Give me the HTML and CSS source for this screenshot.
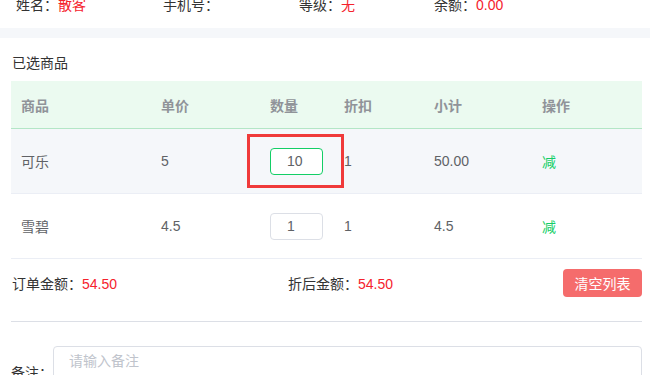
FILE: index.html
```html
<!DOCTYPE html>
<html lang="zh-CN">
<head>
    <meta charset="UTF-8">
    <meta name="viewport" content="width=device-width, initial-scale=1.0">
    <title>收银台</title>
    <link rel="stylesheet" href="styles.css">
</head>
<body>
    <div class="page">
        <!-- 会员信息 -->
        <div class="member-bar">
            <div class="member-item item-name">姓名：<span class="red">散客</span></div>
            <div class="member-item item-phone">手机号：</div>
            <div class="member-item item-level">等级：<span class="red">无</span></div>
            <div class="member-item">余额：<span class="red">0.00</span></div>
        </div>
        <div class="band"></div>

        <div class="content">
            <div class="section-title">已选商品</div>

            <table class="goods-table">
                <colgroup>
                    <col style="width: 140px">
                    <col style="width: 109px">
                    <col style="width: 74px">
                    <col style="width: 90px">
                    <col style="width: 108px">
                    <col style="width: 110px">
                </colgroup>
                <thead>
                    <tr>
                        <th>商品</th>
                        <th>单价</th>
                        <th>数量</th>
                        <th>折扣</th>
                        <th>小计</th>
                        <th>操作</th>
                    </tr>
                </thead>
                <tbody>
                    <tr class="row-hover">
                        <td>可乐</td>
                        <td>5</td>
                        <td>
                            <div class="qty-wrap">
                                <input type="text" class="qty-input active" value="10">
                                <span class="highlight"></span>
                            </div>
                        </td>
                        <td>1</td>
                        <td>50.00</td>
                        <td><a class="op-link">减</a></td>
                    </tr>
                    <tr>
                        <td>雪碧</td>
                        <td>4.5</td>
                        <td>
                            <div class="qty-wrap">
                                <input type="text" class="qty-input" value="1">
                            </div>
                        </td>
                        <td>1</td>
                        <td>4.5</td>
                        <td><a class="op-link">减</a></td>
                    </tr>
                </tbody>
            </table>

            <div class="summary">
                <div class="sum-item sum-order">订单金额：<span class="red">54.50</span></div>
                <div class="sum-item">折后金额：<span class="red">54.50</span></div>
                <button class="btn-clear">清空列表</button>
            </div>

            <div class="divider"></div>

            <div class="remark">
                <label for="remark">备注：</label>
                <textarea id="remark" placeholder="请输入备注"></textarea>
            </div>
        </div>
    </div>
</body>
</html>
```

FILE: styles.css
```css
body {
    margin: 0;
    font-family: "Liberation Sans", "Noto Sans CJK SC", sans-serif;
    font-size: 14px;
    color: #606266;
    background-color: #fff;
}

.page {
    margin-top: -5px;
}

.red {
    color: #f5222d;
}

/* 会员信息 */
.member-bar {
    display: flex;
    height: 33px;
    padding-left: 16px;
    line-height: 20px;
    color: #333;
}

.item-name {
    width: 147px;
}

.item-phone {
    width: 136px;
}

.item-level {
    width: 135px;
}

.band {
    height: 10px;
    background-color: #f5f7fa;
}

.content {
    padding: 15px 8px 0 11px;
}

.section-title {
    line-height: 20px;
    padding-left: 1px;
    color: #333;
    margin-bottom: 8px;
}

/* 商品表格 */
.goods-table {
    width: 631px;
    border-collapse: collapse;
    table-layout: fixed;
}

.goods-table th {
    height: 47px;
    padding: 0 10px;
    text-align: left;
    font-weight: bold;
    color: #909399;
    background-color: #ebfaf0;
    border-bottom: 1px solid #b3e6c6;
}

.goods-table td {
    height: 64px;
    padding: 0 10px;
    border-bottom: 1px solid #ebeef5;
}

.row-hover td {
    background-color: #f5f7fa;
}

.qty-wrap {
    position: relative;
    width: 53px;
}

.qty-input {
    box-sizing: border-box;
    width: 53px;
    height: 27px;
    padding: 0 0 0 16px;
    border: 1px solid #dcdfe6;
    border-radius: 4px;
    font-family: inherit;
    font-size: 14px;
    color: #606266;
    background-color: #fff;
    outline: none;
}

.qty-input.active {
    border-color: #13ce66;
}

.highlight {
    position: absolute;
    left: -23px;
    top: -14px;
    width: 97px;
    height: 54px;
    box-sizing: border-box;
    border: 3px solid #f03a3a;
}

.op-link {
    color: #13ce66;
    cursor: pointer;
}

/* 合计 */
.summary {
    display: flex;
    align-items: center;
    padding: 10px 0 0 1px;
    color: #333;
}

.sum-order {
    width: 276px;
}

.btn-clear {
    margin-left: auto;
    width: 79px;
    height: 28px;
    padding: 0;
    border: none;
    border-radius: 4px;
    background-color: #f56c6c;
    color: #fff;
    font-family: inherit;
    font-size: 14px;
    cursor: pointer;
}

.divider {
    height: 1px;
    margin: 24px 0;
    background-color: #dcdfe6;
}

/* 备注 */
.remark {
    display: flex;
    align-items: center;
    color: #333;
}

.remark label {
    width: 42px;
}

.remark textarea {
    flex: 1;
    box-sizing: border-box;
    height: 52px;
    padding: 4px 15px;
    border: 1px solid #dcdfe6;
    border-radius: 4px;
    font-family: inherit;
    font-size: 14px;
    line-height: 21px;
    resize: none;
    outline: none;
}

.remark textarea::placeholder {
    color: #c0c4cc;
}
```
